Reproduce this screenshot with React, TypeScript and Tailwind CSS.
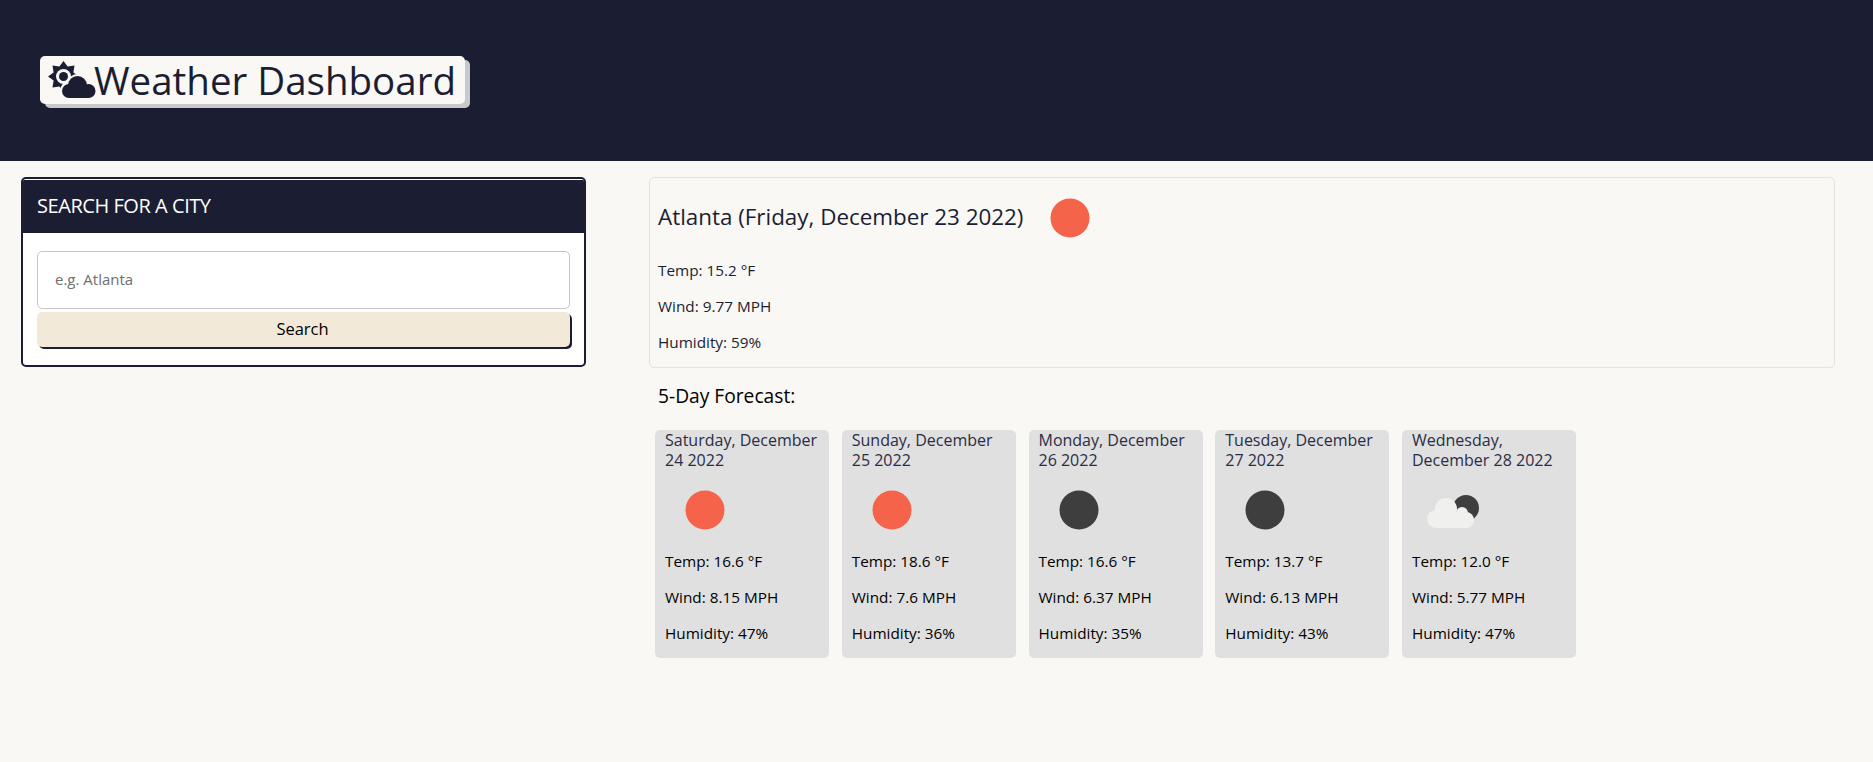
type Sky = "clear" | "night" | "cloudy";

const forecast: { date: string; sky: Sky; temp: string; wind: string; humidity: string }[] = [
  { date: "Saturday, December 24 2022", sky: "clear", temp: "16.6", wind: "8.15", humidity: "47" },
  { date: "Sunday, December 25 2022", sky: "clear", temp: "18.6", wind: "7.6", humidity: "36" },
  { date: "Monday, December 26 2022", sky: "night", temp: "16.6", wind: "6.37", humidity: "35" },
  { date: "Tuesday, December 27 2022", sky: "night", temp: "13.7", wind: "6.13", humidity: "43" },
  { date: "Wednesday, December 28 2022", sky: "cloudy", temp: "12.0", wind: "5.77", humidity: "47" },
];

// sun behind a cloud, drawn to match the banner logo
function LogoIcon() {
  return (
    <svg viewBox="0 0 48 38" className="w-12 h-[38px] shrink-0">
      <polygon
        fill="#1b1e33"
        points="15.5,0 19.6,5.6 26.5,4.5 25.4,11.4 31,15.5 25.4,19.6 26.5,26.5 19.6,25.4 15.5,31 11.4,25.4 4.5,26.5 5.6,19.6 0,15.5 5.6,11.4 4.5,4.5 11.4,5.6"
      />
      <circle cx="15.5" cy="15.5" r="7.5" fill="#f9f8f4" />
      <circle cx="15.5" cy="15.5" r="4.5" fill="#1b1e33" />
      <g fill="#f9f8f4">
        <circle cx="21" cy="29.5" r="9" />
        <circle cx="30" cy="24.5" r="11.5" />
        <circle cx="40" cy="29.5" r="9.5" />
      </g>
      <g fill="#1b1e33">
        <circle cx="21" cy="30" r="7" />
        <circle cx="29.5" cy="24.5" r="9.5" />
        <circle cx="40.5" cy="30" r="7" />
        <rect x="21" y="28" width="19" height="9" />
      </g>
    </svg>
  );
}

function WeatherIcon({ sky }: { sky: Sky }) {
  return (
    <svg viewBox="0 0 80 80" className="w-20 h-20 shrink-0">
      {sky === "clear" && <circle cx="40" cy="40" r="19.5" fill="#f4634a" />}
      {sky === "night" && <circle cx="40" cy="40" r="19.5" fill="#3e3e3e" />}
      {sky === "cloudy" && (
        <g>
          <circle cx="54" cy="38" r="13" fill="#3e3e3e" />
          <g fill="#f0f0ee">
            <circle cx="34" cy="39" r="11" />
            <circle cx="50" cy="43" r="6" />
            <circle cx="24" cy="49" r="9" />
            <circle cx="54" cy="50" r="8" />
            <rect x="24" y="42" width="30" height="16" />
          </g>
        </g>
      )}
    </svg>
  );
}

function Stat({ children }: { children: React.ReactNode }) {
  return <p className="h-6 mb-3 text-[15.3px] leading-6">{children}</p>;
}

export default function App() {
  return (
    <div className="min-h-[762px] bg-[#f9f8f4] text-black font-['Open_Sans',sans-serif]">
      {/* Top Banner */}
      <header className="h-[161px] bg-[#1b1e33] flex items-center pl-10 pb-[2px]">
        <h1 className="h-12 w-[425px] flex items-center pl-2 rounded-[5px] bg-[#f9f8f4] text-[#1b1e33] text-[38.5px] leading-none shadow-[5px_4px_0_#c9c9c9]">
          <LogoIcon />
          <span className="-ml-[2px] pt-[2px]">Weather Dashboard</span>
        </h1>
      </header>

      <main className="flex pl-[21px] pr-[38px] pt-4">
        {/* Search Card */}
        <aside className="w-[565px] h-[190px] shrink-0 border-2 border-[#1b1e33] rounded-[5px] bg-white pt-px overflow-hidden">
          <h2 className="h-[53px] bg-[#1b1e33] text-white text-xl tracking-[-0.45px] leading-[52px] pl-[14px]">
            SEARCH FOR A CITY
          </h2>
          <div className="px-[14px] pt-[18px]">
            <input
              type="text"
              placeholder="e.g. Atlanta"
              className="w-full h-[58px] px-[17px] pb-[3px] border border-[#c6c6c6] rounded-[5px] bg-white text-[15px] outline-none placeholder:text-[#6f6f6f]"
            />
            <button className="w-full h-[35px] mt-[3px] pb-px pr-[2px] rounded-[5px] bg-[#f2e9d8] text-[16.5px] text-black shadow-[2px_2px_0_#1b1e33]">
              Search
            </button>
          </div>
        </aside>

        {/* Current + Forecast */}
        <section className="flex-1 ml-[63px]">
          <div className="h-[191px] border border-[#e2e2e0] rounded-[5px] px-2 text-[#1b1e33]">
            <div className="flex items-center h-20">
              <h2 className="text-[22.4px] leading-8 pb-[2px]">Atlanta (Friday, December 23 2022)</h2>
              <span className="ml-[7px]">
                <WeatherIcon sky="clear" />
              </span>
            </div>
            <Stat>Temp: 15.2 °F</Stat>
            <Stat>Wind: 9.77 MPH</Stat>
            <Stat>Humidity: 59%</Stat>
          </div>

          <h3 className="mt-[14px] ml-[9px] text-[19.2px] leading-7">5-Day Forecast:</h3>

          <div className="flex gap-[12.75px] mt-[20px] ml-[6px]">
            {forecast.map((day) => (
              <article key={day.date} className="w-[174px] h-[228px] rounded-[5px] bg-[#e0e0e0] px-[10px]">
                <h4 className="h-10 text-base leading-5 text-[#2b2d45]">{day.date}</h4>
                <div className="-mb-px">
                  <WeatherIcon sky={day.sky} />
                </div>
                <Stat>Temp: {day.temp} °F</Stat>
                <Stat>Wind: {day.wind} MPH</Stat>
                <Stat>Humidity: {day.humidity}%</Stat>
              </article>
            ))}
          </div>
        </section>
      </main>
    </div>
  );
}
